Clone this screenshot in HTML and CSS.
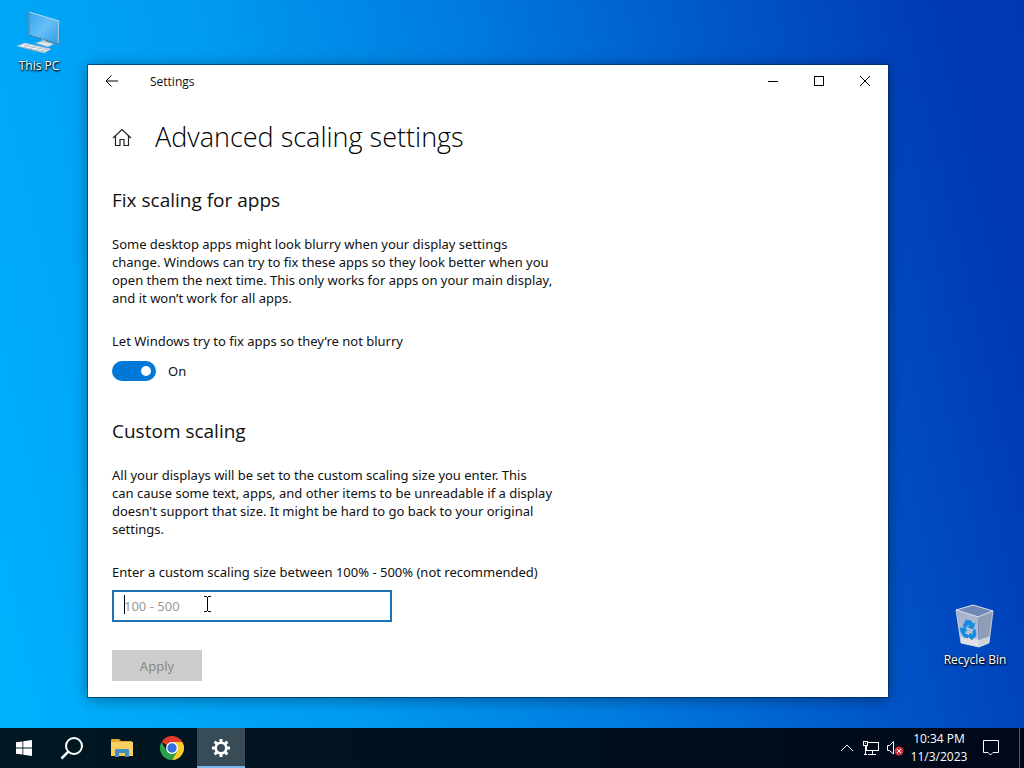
FILE: index.html
```
<!DOCTYPE html>
<html lang="en">
<head>
    <meta charset="UTF-8">
    <meta name="viewport" content="width=device-width, initial-scale=1.0">
    <title>Settings</title>
    <link rel="stylesheet" href="styles.css">
</head>
<body>
    <div class="desktop">
        <a href="#" class="shortcut this-pc">
            <svg width="44" height="44" viewBox="0 0 44 44">
                <defs>
                    <linearGradient id="screen" x1="0" y1="0" x2="1" y2="1">
                        <stop offset="0" stop-color="#35a5ee"/>
                        <stop offset="0.5" stop-color="#67bff7"/>
                        <stop offset="1" stop-color="#2f9cea"/>
                    </linearGradient>
                </defs>
                <path d="M41 11 L43 12 L42 35 L40 34Z" fill="#49687d"/>
                <path d="M12 2 L42 11 L41 34 L12 25Z" fill="url(#screen)" stroke="#bcd6e5"/>
                <path d="M12 2 L12 25 L41 34" fill="none" stroke="#2b6c9a"/>
                <path d="M25 29 L30 31 L29 34 L23 33Z" fill="#9fb2bd"/>
                <path d="M18 33 L26 31 L37 34 L31 37Z" fill="#dce7ed" stroke="#8fa8b5" stroke-width="0.5"/>
                <path d="M0 36 L8 33 L34 39 L27 43Z" fill="#eef3f6" stroke="#9ab0be" stroke-width="0.7"/>
                <path d="M4 37 L28 42 M7 35 L31 40 M6 38 L13 34.5 M12 39 L19 36 M18 40.500 L25 37.500 M23 41.500 L30 38.500" stroke="#9bacba" stroke-width="0.6"/>
            </svg>
            <span>This PC</span>
        </a>
        <a href="#" class="shortcut recycle-bin">
            <svg width="44" height="44" viewBox="0 0 44 44">
                <defs>
                    <linearGradient id="bin" x1="0" y1="0" x2="0" y2="1">
                        <stop offset="0" stop-color="#a2b0c9"/>
                        <stop offset="0.7" stop-color="#b7c2d3"/>
                        <stop offset="1" stop-color="#e4e7e9"/>
                    </linearGradient>
                </defs>
                <path d="M3 6 L20 1 L40 7 L25 13Z" fill="#7288b4" stroke="#dce4ef"/>
                <path d="M3 6 L25 13 L26 43 L8 39Z" fill="url(#bin)"/>
                <path d="M25 13 L40 7 L36 39 L26 43Z" fill="#8f9db7"/>
                <path d="M8 33 L26 36 L37 32 L36 39 L26 43 L8 39Z" fill="#e3e3e1" opacity="0.75"/>
                <path d="M3 6 L25 13 L40 7 M3 6 L8 39 L26 43 L36 39 L40 7" fill="none" stroke="#d8e0ea" stroke-width="0.8"/>
                <g fill="#148ae0" stroke="#148ae0" stroke-width="0.8">
                    <path d="M10 22 L13 16 L18 17 L20 20 L22 19 L20 25 L15 23 L17 22 L15 20 L13 24Z"/>
                    <path d="M7 24 L12 24 L14 27 L12 26.500 L12 30 L15 31 L15 34 L11 33 L8 28Z"/>
                    <path d="M20 27 L22 25 L23 31 L21 34 L19 34 L19 36 L15 32 L18 29 L18 31 L20 31Z"/>
                </g>
            </svg>
            <span>Recycle Bin</span>
        </a>

        <div class="window">
            <div class="titlebar">
                <button type="button" class="back" aria-label="Back">
                    <svg width="14" height="12" viewBox="0 0 14 12"><path d="M1 6 H13 M6.500 0.500 L1 6 L6.500 11.500"/></svg>
                </button>
                <span class="app-name">Settings</span>
                <button type="button" class="caption" aria-label="Minimize">
                    <svg width="11" height="11" viewBox="0 0 11 11" shape-rendering="crispEdges"><path d="M0 5.500 H10"/></svg>
                </button>
                <button type="button" class="caption" aria-label="Maximize">
                    <svg width="11" height="11" viewBox="0 0 11 11" shape-rendering="crispEdges"><path d="M0.500 0.500 H9.500 V9.500 H0.500Z"/></svg>
                </button>
                <button type="button" class="caption" aria-label="Close">
                    <svg width="11" height="11" viewBox="0 0 11 11"><path d="M0 0 L10 10 M10 0 L0 10"/></svg>
                </button>
            </div>
            <div class="content">
                <div class="heading">
                    <button type="button" class="home" aria-label="Home">
                        <svg width="20" height="20" viewBox="0 0 20 20"><path d="M1 11 L10 2.500 L19 11 M3.500 9 V18.500 H8 V12.500 H12 V18.500 H16.500 V9"/></svg>
                    </button>
                    <h1>Advanced scaling settings</h1>
                </div>

                <h2>Fix scaling for apps</h2>
                <p>
                    Some desktop apps might look blurry when your display settings<br>
                    change. Windows can try to fix these apps so they look better when you<br>
                    open them the next time. This only works for apps on your main display,<br>
                    and it won’t work for all apps.
                </p>
                <label class="field-label" for="fixApps">Let Windows try to fix apps so they’re not blurry</label>
                <div class="toggle-row">
                    <input type="checkbox" id="fixApps" class="toggle" checked>
                    <span>On</span>
                </div>

                <h2>Custom scaling</h2>
                <p>
                    All your displays will be set to the custom scaling size you enter. This<br>
                    can cause some text, apps, and other items to be unreadable if a display<br>
                    doesn't support that size. It might be hard to go back to your original<br>
                    settings.
                </p>
                <label class="field-label" for="scale">Enter a custom scaling size between 100% - 500% (not recommended)</label>
                <div class="scale-box">
                    <input type="text" id="scale" placeholder="100 - 500">
                    <span class="caret"></span>
                    <svg class="pointer" width="9" height="18" viewBox="0 0 9 18" shape-rendering="crispEdges"><path d="M1 1.500 H4 M5 1.500 H8 M4.500 2 V16 M1 16.500 H4 M5 16.500 H8"/></svg>
                </div>
                <button type="button" class="apply" disabled>Apply</button>
            </div>
        </div>
    </div>

    <div class="taskbar">
        <button type="button" class="task" aria-label="Start">
            <svg width="16" height="16" viewBox="0 0 16 16" fill="#fff"><path d="M0 2.300 L6.500 1.400 V7.600 H0Z M7.300 1.300 L16 0 V7.600 H7.300Z M0 8.400 H6.500 V14.600 L0 13.700Z M7.300 8.400 H16 V16 L7.300 14.700Z"/></svg>
        </button>
        <button type="button" class="task" aria-label="Search">
            <svg width="24" height="24" viewBox="0 0 24 24" fill="none" stroke="#fff" stroke-width="2"><circle cx="14" cy="10" r="8"/><path d="M8.300 15.700 L1.500 22.500" stroke-width="2.500"/></svg>
        </button>
        <button type="button" class="task app" aria-label="File Explorer">
            <svg width="22" height="18" viewBox="0 0 22 18">
                <path d="M0 1 Q0 0 1 0 H8 L10 2 H20 Q21 2 21 3 V17 H0Z" fill="#e0a82e"/>
                <path d="M0 3 H22 V17 H0Z" fill="#f9cf62"/>
                <path d="M4 18 V11 Q4 10 5 10 H17 Q18 10 18 11 V18 H14 V14 H8 V18Z" fill="#3d8fc6"/>
                <path d="M8 14 H14 V17 H8Z" fill="#f5c951"/>
            </svg>
        </button>
        <button type="button" class="task app" aria-label="Google Chrome">
            <svg width="24" height="24" viewBox="0 0 24 24">
                <path d="M12 12 L1.600 6 A12 12 0 0 1 22.400 6 Z" fill="#e33b2e"/>
                <path d="M12 6 H22.400 A12 12 0 0 1 12 24 L17.200 15Z" fill="#fcc92b"/>
                <path d="M1.600 6 A12 12 0 0 0 12 24 L17.200 15 L12 12 L6.800 15Z" fill="#29a04a"/>
                <path d="M12 6 H22.400 L17.200 15Z" fill="#fcc92b"/>
                <circle cx="12" cy="12" r="6" fill="#fff"/>
                <circle cx="12" cy="12" r="4.700" fill="#3273df"/>
            </svg>
        </button>
        <button type="button" class="task active" aria-label="Settings">
            <svg width="18" height="18" viewBox="0 0 18 18" fill="none" stroke="#fff">
                <circle cx="9" cy="9" r="5.300" stroke-width="2.600"/>
                <g stroke-width="3">
                    <path d="M9 0 V3 M9 15 V18 M0 9 H3 M15 9 H18"/>
                    <path d="M2.600 2.600 L4.800 4.800 M13.200 13.200 L15.400 15.400 M2.600 15.400 L4.800 13.200 M13.200 4.800 L15.400 2.600"/>
                </g>
            </svg>
        </button>

        <div class="tray">
            <button type="button" class="tray-icon" aria-label="Show hidden icons">
                <svg width="14" height="8" viewBox="0 0 14 8"><path d="M1 7 L7 1 L13 7"/></svg>
            </button>
            <button type="button" class="tray-icon" aria-label="Network">
                <svg width="18" height="16" viewBox="0 0 18 16" shape-rendering="crispEdges"><path d="M6 2.500 H16.500 V10.500 H4.500 V6 M10.500 11 V14 M6 14.500 H14 M1.500 1.500 H5.500 V5.500 H1.500Z M3.500 6 V14 M2 14.500 H5 M3 3.500 H4"/></svg>
            </button>
            <button type="button" class="tray-icon" aria-label="Volume">
                <svg width="18" height="16" viewBox="0 0 18 16">
                    <path d="M1.500 5.500 H3.500 L7.500 1.500 V14 L3.500 10.500 H1.500Z"/>
                    <circle cx="13" cy="11" r="4.500" fill="#d5333c" stroke="none"/>
                    <path d="M11 9 L15 13 M15 9 L11 13"/>
                </svg>
            </button>
            <button type="button" class="clock">
                <span>10:34 PM</span>
                <span>11/3/2023</span>
            </button>
            <button type="button" class="notifications" aria-label="Notifications">
                <svg width="18" height="18" viewBox="0 0 18 18"><path d="M1.500 1.500 H16.500 V13.500 H11 L8.500 16 L6 13.500 H1.500Z"/></svg>
            </button>
        </div>
    </div>
</body>
</html>
```
FILE: styles.css
```
* {
    box-sizing: border-box;
}
body {
    margin: 0;
    height: 100vh;
    display: flex;
    flex-direction: column;
    overflow: hidden;
    font-family: "Noto Sans", "Open Sans", sans-serif;
    font-size: 13px;
    line-height: 18px;
    color: #111;
    background: linear-gradient(77deg, #00b3fd 0%, #00a4f6 18%, #009cf1 30%, #007ce0 52%, #0055c8 75%, #003bb7 92%, #0037b1 100%);
}
button, input {
    font: inherit;
    color: inherit;
}
button {
    display: flex;
    align-items: center;
    justify-content: center;
    padding: 0;
    border: none;
    background: none;
}
svg {
    display: block;
}
h1, h2, p {
    margin: 0;
}

/* desktop */
.desktop {
    flex: 1;
    position: relative;
}
.shortcut {
    position: absolute;
    width: 76px;
    display: flex;
    flex-direction: column;
    align-items: center;
    gap: 3px;
    font-family: "Open Sans", sans-serif;
    font-size: 12px;
    line-height: 18px;
    color: #fff;
    text-decoration: none;
    text-shadow: 1px 1px 2px #000, 0 1px 2px #000;
}
.this-pc {
    left: 1px;
    top: 10px;
}
.recycle-bin {
    right: 11px;
    bottom: 59px;
}

/* settings window */
.window {
    position: absolute;
    top: 65px;
    left: 88px;
    right: 136px;
    bottom: 31px;
    background: #fff;
    box-shadow: 0 0 0 1px rgba(0, 40, 90, 0.6), 0 2px 14px rgba(0, 0, 0, 0.4);
}
.titlebar {
    display: flex;
    align-items: center;
    height: 32px;
}
.titlebar svg {
    fill: none;
    stroke: #000;
}
.back {
    width: 48px;
    height: 32px;
}
.app-name {
    flex: 1;
    padding: 2px 0 0 14px;
    font-family: "Open Sans", sans-serif;
    font-size: 12px;
}
.caption {
    width: 46px;
    height: 32px;
}
.content {
    padding: 22px 24px 16px;
}
.heading {
    display: flex;
    align-items: center;
    gap: 23px;
    height: 36px;
    margin-bottom: 32px;
}
.home svg {
    fill: none;
    stroke: #222;
    stroke-width: 1.2;
}
h1, h2 {
    font-family: "Open Sans", sans-serif;
}
h1 {
    font-size: 27px;
    line-height: 36px;
    font-weight: 300;
    color: #000;
}
h2 {
    font-size: 19px;
    line-height: 26px;
    font-weight: 400;
}
p {
    margin: 22px 0 25px;
}
.field-label {
    display: block;
}
.toggle-row {
    display: flex;
    align-items: center;
    gap: 12px;
    height: 20px;
    margin: 11px 0 37px;
}
.toggle {
    appearance: none;
    width: 44px;
    height: 20px;
    margin: 0;
    border-radius: 10px;
    background: #0078d7;
    display: flex;
    align-items: center;
    padding: 0 5px;
}
.toggle::before {
    content: "";
    width: 10px;
    height: 10px;
    border-radius: 50%;
    background: #fff;
}
.toggle:checked {
    justify-content: flex-end;
}
.scale-box {
    position: relative;
    width: 280px;
    margin: 9px 0 28px;
}
.scale-box input {
    display: block;
    width: 100%;
    height: 32px;
    padding: 0 10px;
    border: 2px solid #1c70b5;
    background: #fff;
    outline: none;
}
.scale-box input::placeholder {
    color: #999;
    opacity: 1;
}
.caret {
    position: absolute;
    left: 12px;
    top: 5px;
    width: 1px;
    height: 19px;
    background: #000;
}
.pointer {
    position: absolute;
    left: 91px;
    top: 5px;
    fill: none;
    stroke: #000;
}
.apply {
    width: 90px;
    height: 31px;
    background: #ccc;
    color: #888;
}

/* taskbar */
.taskbar {
    display: flex;
    height: 40px;
    color: #fff;
    background: linear-gradient(90deg, #001721, #01101d 55%, #000819);
}
.task {
    width: 48px;
    height: 40px;
}
.app {
    margin-left: 2px;
}
.active {
    margin-left: 1px;
    background: #374c56;
    border-bottom: 2px solid #76b9ed;
    padding-top: 2px;
}
.tray {
    display: flex;
    margin-left: auto;
    margin-right: 4px;
    border-right: 1px solid #515966;
}
.tray svg {
    fill: none;
    stroke: #fff;
}
.tray-icon {
    width: 24px;
}
.clock {
    flex-direction: column;
    width: 64px;
    font-family: "Open Sans", sans-serif;
    font-size: 12px;
}
.notifications {
    width: 48px;
    padding-right: 8px;
}
```
